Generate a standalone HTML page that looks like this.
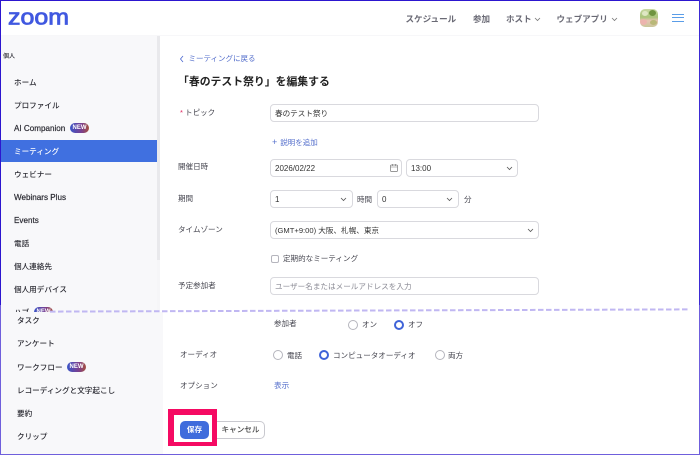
<!DOCTYPE html>
<html lang="ja"><head><meta charset="utf-8"><style>
html,body{margin:0;padding:0}
body{width:700px;height:455px;overflow:hidden;background:#fff;position:relative;font-family:"Liberation Sans","Noto Sans CJK JP",sans-serif;color:#333;font-size:8px}
#w{position:absolute;left:0;top:0;width:700px;height:455px;filter:blur(.3px)}
.t{position:absolute;white-space:nowrap;line-height:12px;height:12px}
.s{font-weight:500;color:#2b2b33;font-size:7.6px;margin-top:.7px}
.lat{font-size:8.1px;-webkit-text-stroke:.2px #2b2b33}
.n{font-weight:700;color:#6a6a75;font-size:8.55px}
.l{color:#45454f;font-size:7.55px}
.b{position:absolute;box-sizing:border-box;height:18px;border:1px solid #d9d9de;border-radius:4px;background:#fff;font-size:7.6px;color:#333;line-height:16px;padding:1px 0 0 4px;white-space:nowrap}
.r{position:absolute;box-sizing:border-box;width:10px;height:10px;border-radius:50%;border:1px solid #b5b5bd;background:#fff}
.r.on{border:2.7px solid #3f63d8}
.new{position:absolute;width:19px;height:10px;border-radius:5px;background:linear-gradient(90deg,#3a55c8,#7a3f90 60%,#a5503f);color:#fff;font-size:6px;font-weight:700;line-height:10px;text-align:center}
.c{position:absolute}
</style></head><body><div id="w">
<div class="c" style="left:1px;top:35px;width:156px;height:277px;background:#f8f8fa"></div>
<div class="c" style="left:157px;top:35px;width:3px;height:225px;background:#e9e9ec"></div>
<div class="c" style="left:157px;top:260px;width:3px;height:52px;background:#f6f6f8"></div>
<div class="c" style="left:1px;top:312px;width:162px;height:142px;background:#f8f8fa"></div>
<div class="c" style="left:1px;top:35px;width:698px;height:1px;background:#f7f7f9"></div>
<svg class="c" style="left:8px;top:5px" width="64" height="24"><text x="0" y="19.5" font-family="Liberation Sans" font-size="22" font-weight="400" fill="#4058e0" stroke="#4058e0" stroke-width=".8" textLength="61" lengthAdjust="spacingAndGlyphs">zoom</text></svg>

<div class="t n" style="left:405.5px;top:13px">スケジュール</div>
<div class="t n" style="left:473px;top:13px">参加</div>
<div class="t n" style="left:506px;top:13px">ホスト</div>
<svg class="c" style="left:534px;top:17px" width="7" height="5"><path d="M1 1l2.5 2.5L6 1" fill="none" stroke="#777" stroke-width=".8"/></svg>
<div class="t n" style="left:556.5px;top:13px">ウェブアプリ</div>
<svg class="c" style="left:611px;top:17px" width="7" height="5"><path d="M1 1l2.5 2.5L6 1" fill="none" stroke="#777" stroke-width=".8"/></svg>
<div class="c" style="left:640px;top:9px;width:18px;height:18px;border-radius:5px;overflow:hidden;background:linear-gradient(180deg,#c9d8a4 0,#a9c47a 45%,#e8c4b4 65%,#c9c79a 100%)"><div class="c" style="left:9px;top:1px;width:7px;height:6px;border-radius:50%;background:#6f9440"></div><div class="c" style="left:0;top:10px;width:7px;height:6px;border-radius:50%;background:#ecb4ae"></div><div class="c" style="left:10px;top:11px;width:7px;height:5px;border-radius:50%;background:#b9b878"></div><div class="c" style="left:2px;top:2px;width:6px;height:5px;border-radius:50%;background:#dfe7c4"></div></div>
<div class="c" style="left:672px;top:14px;width:12px;height:1px;background:#5a9de8"></div>
<div class="c" style="left:672px;top:17px;width:12px;height:1px;background:#5a9de8"></div>
<div class="c" style="left:672px;top:21px;width:12px;height:1px;background:#5a9de8"></div>

<div class="t s" style="left:3px;top:50px;font-size:6px">個人</div>
<div class="t s" style="left:14px;top:76px">ホーム</div>
<div class="t s" style="left:14px;top:99px">プロファイル</div>
<div class="t s lat" style="left:14px;top:122px">AI Companion</div>
<div class="new" style="left:70px;top:123px">NEW</div>
<div class="c" style="left:1px;top:140px;width:156px;height:22px;background:#4070e0"></div>
<div class="t s" style="left:14px;top:145px;color:#fff">ミーティング</div>
<div class="t s" style="left:14px;top:168px">ウェビナー</div>
<div class="t s lat" style="left:14px;top:191px">Webinars Plus</div>
<div class="t s lat" style="left:14px;top:214px">Events</div>
<div class="t s" style="left:14px;top:237px">電話</div>
<div class="t s" style="left:14px;top:260px">個人連絡先</div>
<div class="t s" style="left:14px;top:283px">個人用デバイス</div>
<div style="position:absolute;left:0;top:300px;width:160px;height:12px;overflow:hidden"><div class="t s" style="left:14px;top:6px">ハブ</div><div class="new" style="left:34px;top:7px">NEW</div></div>
<div class="t s" style="left:17px;top:314px">タスク</div>
<div class="t s" style="left:17px;top:337px">アンケート</div>
<div class="t s" style="left:17px;top:361px">ワークフロー</div>
<div class="new" style="left:67px;top:362px">NEW</div>
<div class="t s" style="left:17px;top:384px">レコーディングと文字起こし</div>
<div class="t s" style="left:17px;top:407px">要約</div>
<div class="t s" style="left:17px;top:430px">クリップ</div>

<svg class="c" style="left:179px;top:55px" width="6" height="8"><path d="M4 1L1.5 4 4 7" fill="none" stroke="#4a67d0" stroke-width=".8"/></svg>
<div class="t" style="left:188.5px;top:53px;color:#5670cc;font-size:7.5px">ミーティングに戻る</div>
<div class="t" style="left:178px;top:76px;font-size:10.85px;font-weight:700;color:#222">「春のテスト祭り」を編集する</div>

<div class="t l" style="left:180px;top:107px"><span style="color:#e0245e">*</span> トピック</div>
<div class="b" style="left:270px;top:104px;width:269px">春のテスト祭り</div>
<div class="t" style="left:272px;top:136px;color:#5670cc;font-size:7.5px"><span style="font-size:9px;margin-right:3px">+</span>説明を追加</div>

<div class="t l" style="left:178px;top:161px">開催日時</div>
<div class="b" style="left:270px;top:159px;width:132px;font-size:8px">2026/02/22</div>
<svg class="c" style="left:389px;top:163px" width="10" height="10"><rect x="1.5" y="2" width="7" height="6.5" rx="1" fill="none" stroke="#777" stroke-width=".7"/><path d="M1.5 4h7M3.5 1v2M6.5 1v2" stroke="#777" stroke-width=".6"/></svg>
<div class="b" style="left:406px;top:159px;width:112px;font-size:8px">13:00</div>
<svg class="c" style="left:506px;top:166px" width="7" height="5"><path d="M1 1l2.5 2.5L6 1" fill="none" stroke="#555" stroke-width=".8"/></svg>

<div class="t l" style="left:178px;top:193px">期間</div>
<div class="b" style="left:270px;top:190px;width:83px;font-size:8px">1</div>
<svg class="c" style="left:340px;top:197px" width="7" height="5"><path d="M1 1l2.5 2.5L6 1" fill="none" stroke="#555" stroke-width=".8"/></svg>
<div class="t l" style="left:357px;top:194px">時間</div>
<div class="b" style="left:377px;top:190px;width:82px;font-size:8px">0</div>
<svg class="c" style="left:446px;top:197px" width="7" height="5"><path d="M1 1l2.5 2.5L6 1" fill="none" stroke="#555" stroke-width=".8"/></svg>
<div class="t l" style="left:464px;top:194px">分</div>

<div class="t l" style="left:178px;top:224px">タイムゾーン</div>
<div class="b" style="left:270px;top:221px;width:269px">(GMT+9:00) 大阪、札幌、東京</div>
<svg class="c" style="left:527px;top:228px" width="7" height="5"><path d="M1 1l2.5 2.5L6 1" fill="none" stroke="#555" stroke-width=".8"/></svg>

<div class="c" style="box-sizing:border-box;left:271px;top:255px;width:8px;height:8px;border:1px solid #b5b5bd;border-radius:2px"></div>
<div class="t l" style="left:283px;top:253px">定期的なミーティング</div>

<div class="t l" style="left:178px;top:280px">予定参加者</div>
<div class="b" style="left:270px;top:277px;width:269px;color:#8a8a94">ユーザー名またはメールアドレスを入力</div>

<svg class="c" style="left:0;top:305px" width="700" height="10"><path d="M50 6.6L689 4.4" fill="none" stroke="#c0b7f2" stroke-width="2" stroke-dasharray="5.5 2.5"/></svg>

<div class="t l" style="left:274px;top:318px">参加者</div>
<div class="r" style="left:348px;top:320px"></div>
<div class="t l" style="left:362px;top:319px">オン</div>
<div class="r on" style="left:394px;top:320px"></div>
<div class="t l" style="left:408px;top:319px">オフ</div>

<div class="t l" style="left:180px;top:349px">オーディオ</div>
<div class="r" style="left:273px;top:350px"></div>
<div class="t l" style="left:287px;top:350px">電話</div>
<div class="r on" style="left:319px;top:350px"></div>
<div class="t l" style="left:333px;top:350px">コンピュータオーディオ</div>
<div class="r" style="left:435px;top:350px"></div>
<div class="t l" style="left:448px;top:350px">両方</div>

<div class="t l" style="left:180px;top:380px">オプション</div>
<div class="t" style="left:274px;top:380px;color:#5670cc;font-size:7.6px">表示</div>

<div class="c" style="left:168px;top:409px;width:49px;height:37px;background:#f50a63"></div>
<div class="c" style="left:174px;top:415px;width:38px;height:27px;background:#fff"></div>
<div class="c" style="left:180px;top:421px;width:29px;height:18px;border-radius:5px;background:#3f6cdc;color:#fff;font-size:7.6px;font-weight:700;text-align:center;line-height:18px">保存</div>
<div class="c" style="box-sizing:border-box;left:217px;top:421px;width:48px;height:18px;border:1px solid #c9c9cf;border-left:0;border-radius:0 5px 5px 0;font-size:7.6px;color:#444;line-height:16px;text-align:center;background:#fff;font-weight:500">キャンセル</div>

<div class="c" style="left:0;top:0;width:700px;height:1px;background:#2c16cf"></div>
<div class="c" style="left:0;top:0;width:1px;height:305px;background:#2c16cf"></div>
<div class="c" style="left:699px;top:0;width:1px;height:305px;background:#3d2bd4"></div>
<div class="c" style="left:0;top:305px;width:1px;height:150px;background:#6f5fdc"></div>
<div class="c" style="left:699px;top:305px;width:1px;height:150px;background:#6f5fdc"></div>
<div class="c" style="left:0;top:454px;width:700px;height:1px;background:#6f5fdc"></div>
</div></body></html>
